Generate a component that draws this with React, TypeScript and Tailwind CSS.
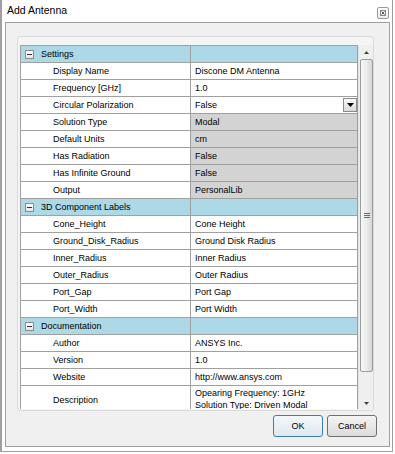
import React from "react";

type Row =
  | { kind: "cat"; label: string }
  | { kind: "prop"; label: string; value: string; ro?: boolean; dropdown?: boolean; tall?: boolean };

const rows: Row[] = [
  { kind: "cat", label: "Settings" },
  { kind: "prop", label: "Display Name", value: "Discone DM Antenna" },
  { kind: "prop", label: "Frequency [GHz]", value: "1.0" },
  { kind: "prop", label: "Circular Polarization", value: "False", dropdown: true },
  { kind: "prop", label: "Solution Type", value: "Modal", ro: true },
  { kind: "prop", label: "Default Units", value: "cm", ro: true },
  { kind: "prop", label: "Has Radiation", value: "False", ro: true },
  { kind: "prop", label: "Has Infinite Ground", value: "False", ro: true },
  { kind: "prop", label: "Output", value: "PersonalLib", ro: true },
  { kind: "cat", label: "3D Component Labels" },
  { kind: "prop", label: "Cone_Height", value: "Cone Height" },
  { kind: "prop", label: "Ground_Disk_Radius", value: "Ground Disk Radius" },
  { kind: "prop", label: "Inner_Radius", value: "Inner Radius" },
  { kind: "prop", label: "Outer_Radius", value: "Outer Radius" },
  { kind: "prop", label: "Port_Gap", value: "Port Gap" },
  { kind: "prop", label: "Port_Width", value: "Port Width" },
  { kind: "cat", label: "Documentation" },
  { kind: "prop", label: "Author", value: "ANSYS Inc." },
  { kind: "prop", label: "Version", value: "1.0" },
  { kind: "prop", label: "Website", value: "http://www.ansys.com" },
  {
    kind: "prop",
    label: "Description",
    value: "Opearing Frequency: 1GHz\nSolution Type: Driven Modal",
    tall: true,
  },
];

function ExpandBox() {
  return (
    <div className="w-[9px] h-[9px] border border-[#8c8c8c] bg-linear-to-b from-white to-[#e4e4e4] flex items-center justify-center shrink-0">
      <div className="w-[5px] h-[1px] bg-[#303030]" />
    </div>
  );
}

function CatRow({ label }: { label: string }) {
  return (
    <div className="flex h-[17px] shrink-0 border-b border-[#a0a0a0] bg-[#add8e6]">
      <div className="w-[170px] flex items-center pl-[4px] border-r border-[#a0a0a0]">
        <ExpandBox />
        <span className="ml-[7px] leading-[16px]">{label}</span>
      </div>
      <div className="flex-1" />
    </div>
  );
}

function PropRow({ r }: { r: Extract<Row, { kind: "prop" }> }) {
  const h = r.tall ? "h-[28px]" : "h-[17px]";
  return (
    <div className={`flex ${h} shrink-0 border-b border-[#a0a0a0] bg-white`}>
      <div className="w-[170px] flex items-center pl-[32px] border-r border-[#a0a0a0]">
        <span className="leading-[16px]">{r.label}</span>
      </div>
      <div
        className={`relative flex-1 pl-[4px] ${r.ro ? "bg-[#d3d3d3]" : "bg-white"} ${
          r.tall ? "pt-[1px]" : "flex items-center"
        }`}
      >
        {r.tall ? (
          r.value.split("\n").map((l) => (
            <div key={l} className="leading-[12px]">
              {l}
            </div>
          ))
        ) : (
          <span className="leading-[16px]">{r.value}</span>
        )}
        {r.dropdown && (
          <div className="absolute right-0 top-[1px] w-[14px] h-[14px] border border-[#8a8a8a] bg-linear-to-b from-[#fafafa] to-[#dadada] flex items-center justify-center">
            <svg width="7" height="4" viewBox="0 0 7 4">
              <polygon points="0,0 7,0 3.5,4" fill="#000" />
            </svg>
          </div>
        )}
      </div>
    </div>
  );
}

function Scrollbar() {
  return (
    <div className="w-[15px] h-[364px] flex flex-col bg-[#efefef] border-l border-[#e2e2e2]">
      <div className="h-[14px] flex items-center justify-center">
        <svg width="5" height="3" viewBox="0 0 5 3">
          <polygon points="0,3 5,3 2.5,0" fill="#404040" />
        </svg>
      </div>
      <div className="ml-[1px] w-[13px] h-[313px] rounded-[2px] border border-[#9c9c9c] bg-linear-to-r from-[#f6f6f6] via-[#ececec] to-[#d6d6d6] flex flex-col items-center justify-center gap-[1px]">
        <div className="w-[6px] h-[1px] bg-[#6a6a6a]" />
        <div className="w-[6px] h-[1px] bg-[#6a6a6a]" />
        <div className="w-[6px] h-[1px] bg-[#6a6a6a]" />
      </div>
      <div className="flex-1 flex items-end justify-center pb-[4px]">
        <svg width="5" height="3" viewBox="0 0 5 3">
          <polygon points="0,0 5,0 2.5,3" fill="#404040" />
        </svg>
      </div>
    </div>
  );
}

export default function App() {
  return (
    <div className="w-[395px] h-[454px] bg-white font-['Liberation_Sans',Arial,sans-serif] text-[9px] text-black overflow-hidden">
      <div className="w-[393px] h-[452px] border-l-2 border-r border-b border-[#a0a0a0] flex flex-col">
        <div className="h-[22px] shrink-0 flex items-start justify-between pl-[5px] pr-[3px]">
          <span className="text-[10.5px] leading-[12px] mt-[4px]">Add Antenna</span>
          <div className="mt-[7px] w-[12px] h-[12px] border border-[#9a9a9a] rounded-[2px] bg-linear-to-b from-white to-[#ececec] flex items-center justify-center">
            <svg width="6" height="6" viewBox="0 0 6 6">
              <rect x="0.5" y="0.5" width="5" height="5" fill="none" stroke="#8a8a8a" strokeWidth="1" />
              <path d="M1.5 1.5 L4.5 4.5 M4.5 1.5 L1.5 4.5" stroke="#555" strokeWidth="1" />
            </svg>
          </div>
        </div>
        <div className="ml-[3px] mr-[2px] h-[425px] shrink-0 border border-[#a0a0a0] bg-[#f0f0f0] flex flex-col">
          <div className="mt-[13px] ml-[11px] w-[357px] h-[375px] border border-[#dadada] rounded-[3px] bg-[#f5f5f5] pl-[2px] pt-[8px] pb-[1px] flex">
            <div className="w-[338px] h-[364px] border-l border-t border-r border-[#a0a0a0] overflow-hidden flex flex-col">
              {rows.map((r, i) =>
                r.kind === "cat" ? <CatRow key={i} label={r.label} /> : <PropRow key={i} r={r} />
              )}
            </div>
            <Scrollbar />
          </div>
          <div className="mt-[4px] flex justify-end gap-[4px] mr-[12px]">
            <button className="w-[50px] h-[22px] rounded-[3px] border border-[#3c7fb1] bg-linear-to-b from-[#f4f8fb] to-[#dfe8ef] text-[9px] leading-none">
              OK
            </button>
            <button className="w-[50px] h-[22px] rounded-[3px] border border-[#707070] bg-linear-to-b from-[#f4f4f4] to-[#dcdcdc] text-[9px] leading-none">
              Cancel
            </button>
          </div>
        </div>
      </div>
    </div>
  );
}
